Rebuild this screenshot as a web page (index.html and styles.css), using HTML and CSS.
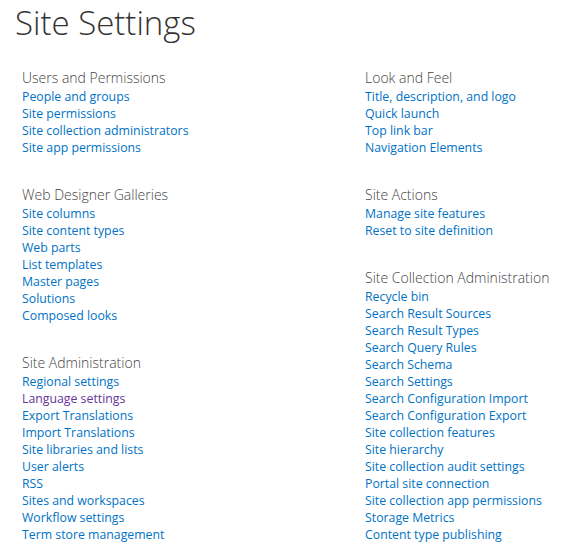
FILE: index.html
```html
<!DOCTYPE html>
<html lang="en">
<head>
<meta charset="utf-8">
<title>Site Settings</title>
<link rel="stylesheet" href="styles.css">
</head>
<body>
<h1 class="page-title">Site Settings</h1>
<div class="columns">
  <div class="column">
    <section class="group">
      <h2 class="group-title">Users and Permissions</h2>
      <ul class="links">
        <li><a href="#">People and groups</a></li>
        <li><a href="#">Site permissions</a></li>
        <li><a href="#">Site collection administrators</a></li>
        <li><a href="#">Site app permissions</a></li>
      </ul>
    </section>
    <section class="group">
      <h2 class="group-title">Web Designer Galleries</h2>
      <ul class="links">
        <li><a href="#">Site columns</a></li>
        <li><a href="#">Site content types</a></li>
        <li><a href="#">Web parts</a></li>
        <li><a href="#">List templates</a></li>
        <li><a href="#">Master pages</a></li>
        <li><a href="#">Solutions</a></li>
        <li><a href="#">Composed looks</a></li>
      </ul>
    </section>
    <section class="group">
      <h2 class="group-title">Site Administration</h2>
      <ul class="links">
        <li><a href="#">Regional settings</a></li>
        <li><a href="#" class="visited">Language settings</a></li>
        <li><a href="#">Export Translations</a></li>
        <li><a href="#">Import Translations</a></li>
        <li><a href="#">Site libraries and lists</a></li>
        <li><a href="#">User alerts</a></li>
        <li><a href="#">RSS</a></li>
        <li><a href="#">Sites and workspaces</a></li>
        <li><a href="#">Workflow settings</a></li>
        <li><a href="#">Term store management</a></li>
      </ul>
    </section>
  </div>
  <div class="column">
    <section class="group">
      <h2 class="group-title">Look and Feel</h2>
      <ul class="links">
        <li><a href="#">Title, description, and logo</a></li>
        <li><a href="#">Quick launch</a></li>
        <li><a href="#">Top link bar</a></li>
        <li><a href="#">Navigation Elements</a></li>
      </ul>
    </section>
    <section class="group">
      <h2 class="group-title">Site Actions</h2>
      <ul class="links">
        <li><a href="#">Manage site features</a></li>
        <li><a href="#">Reset to site definition</a></li>
      </ul>
    </section>
    <section class="group">
      <h2 class="group-title">Site Collection Administration</h2>
      <ul class="links">
        <li><a href="#">Recycle bin</a></li>
        <li><a href="#">Search Result Sources</a></li>
        <li><a href="#">Search Result Types</a></li>
        <li><a href="#">Search Query Rules</a></li>
        <li><a href="#">Search Schema</a></li>
        <li><a href="#">Search Settings</a></li>
        <li><a href="#">Search Configuration Import</a></li>
        <li><a href="#">Search Configuration Export</a></li>
        <li><a href="#">Site collection features</a></li>
        <li><a href="#">Site hierarchy</a></li>
        <li><a href="#">Site collection audit settings</a></li>
        <li><a href="#">Portal site connection</a></li>
        <li><a href="#">Site collection app permissions</a></li>
        <li><a href="#">Storage Metrics</a></li>
        <li><a href="#">Content type publishing</a></li>
      </ul>
    </section>
  </div>
</div>
</body>
</html>
```
FILE: styles.css
```css
html, body {
  margin: 0;
  padding: 0;
  background: #ffffff;
}
body {
  font-family: "Open Sans", "Noto Sans", sans-serif;
  color: #444444;
  overflow: hidden;
}
.page-title {
  margin: 3px 0 0 0;
  padding-left: 15px;
  font-size: 33px;
  font-weight: 300;
  line-height: 40px;
  color: #333333;
}
.columns {
  display: grid;
  grid-template-columns: 343px 1fr;
  padding-left: 22px;
  margin-top: 25px;
}
.group {
  margin-bottom: 29px;
}
.group-title {
  margin: 0;
  font-size: 14px;
  font-weight: 300;
  line-height: 20px;
  color: #444444;
}
.links {
  list-style: none;
  margin: 0;
  padding: 0;
}
.links li {
  font-size: 12.3px;
  line-height: 17px;
  white-space: nowrap;
}
.links a {
  color: #0072c6;
  text-decoration: none;
}
.links a.visited {
  color: #663399;
}
```
